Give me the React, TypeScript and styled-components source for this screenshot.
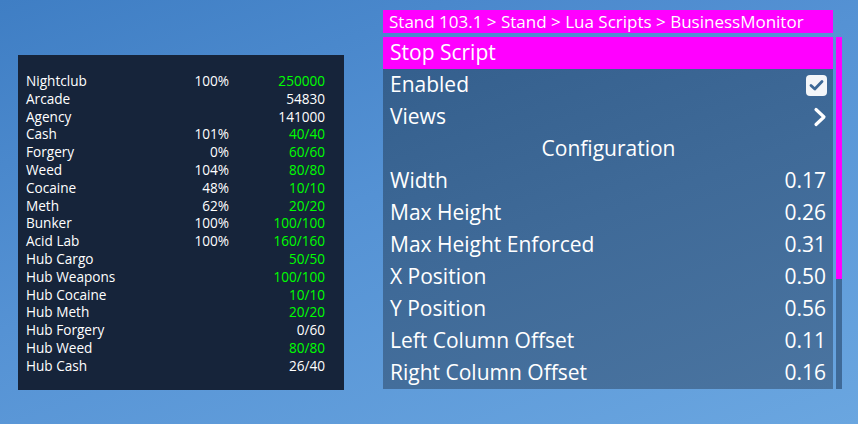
import React from "react";
import styled, { createGlobalStyle } from "styled-components";

const GlobalStyle = createGlobalStyle`
  html, body {
    margin: 0;
    padding: 0;
  }
  body {
    width: 858px;
    height: 424px;
    overflow: hidden;
    background: linear-gradient(160deg, #3f7ec4 0%, #5592d4 45%, #6aa6e0 100%);
    font-family: "Open Sans", "Noto Sans", sans-serif;
    color: #ffffff;
  }
`;

const Screen = styled.div`
  display: flex;
  align-items: flex-start;
  gap: 39px;
  padding-left: 18px;
  height: 424px;
  box-sizing: border-box;
`;

/* ---- business overlay ---- */

const Overlay = styled.div`
  margin-top: 55px;
  width: 326px;
  height: 335px;
  box-sizing: border-box;
  padding: 17px 19px 0 8px;
  background: #16243a;
`;

const StatRow = styled.div`
  display: grid;
  grid-template-columns: 1fr 60px 96px;
  height: 17.8px;
  line-height: 17.8px;
  font-size: 13.6px;
  white-space: nowrap;
`;

const Cell = styled.span<{ $right?: boolean; $full?: boolean }>`
  text-align: ${(p) => (p.$right ? "right" : "left")};
  color: ${(p) => (p.$full ? "#00ff00" : "#ffffff")};
`;

/* ---- stand menu ---- */

const Menu = styled.div`
  margin-top: 10px;
  display: flex;
  flex-direction: column;
  gap: 4px;
`;

const Breadcrumb = styled.div`
  width: 450px;
  height: 23px;
  box-sizing: border-box;
  padding-left: 6px;
  background: #ff00ff;
  font-size: 17px;
  line-height: 23px;
  white-space: nowrap;
`;

const ListWrap = styled.div`
  display: flex;
  gap: 3px;
`;

const List = styled.div`
  width: 450px;
  background: linear-gradient(160deg, #335e8c 0%, #3f6a98 50%, #4a74a0 100%);
`;

const Item = styled.div<{ $active?: boolean; $center?: boolean }>`
  height: 32px;
  box-sizing: border-box;
  padding: 0 6px 2px 7px;
  display: flex;
  align-items: center;
  justify-content: ${(p) => (p.$center ? "center" : "space-between")};
  background: ${(p) => (p.$active ? "#ff00ff" : "transparent")};
  font-size: 21px;
  white-space: nowrap;
`;

const Value = styled.span`
  margin-right: 1px;
`;

const Check = styled.span`
  width: 21px;
  height: 21px;
  margin-top: 2px;
  border-radius: 4px;
  background: #f4f6f9;
  display: flex;
  align-items: center;
  justify-content: center;
`;

const ChevronBox = styled.span`
  display: flex;
  margin-top: 2px;
`;

const Track = styled.div`
  width: 6px;
  background: #3f6a98;
  display: flex;
  flex-direction: column;
`;

const Thumb = styled.div`
  height: 242px;
  background: #ff00ff;
`;

type Stat = { name: string; pct?: string; value: string; full?: boolean };

const stats: Stat[] = [
  { name: "Nightclub", pct: "100%", value: "250000", full: true },
  { name: "Arcade", value: "54830" },
  { name: "Agency", value: "141000" },
  { name: "Cash", pct: "101%", value: "40/40", full: true },
  { name: "Forgery", pct: "0%", value: "60/60", full: true },
  { name: "Weed", pct: "104%", value: "80/80", full: true },
  { name: "Cocaine", pct: "48%", value: "10/10", full: true },
  { name: "Meth", pct: "62%", value: "20/20", full: true },
  { name: "Bunker", pct: "100%", value: "100/100", full: true },
  { name: "Acid Lab", pct: "100%", value: "160/160", full: true },
  { name: "Hub Cargo", value: "50/50", full: true },
  { name: "Hub Weapons", value: "100/100", full: true },
  { name: "Hub Cocaine", value: "10/10", full: true },
  { name: "Hub Meth", value: "20/20", full: true },
  { name: "Hub Forgery", value: "0/60" },
  { name: "Hub Weed", value: "80/80", full: true },
  { name: "Hub Cash", value: "26/40" },
];

const config: [string, string][] = [
  ["Width", "0.17"],
  ["Max Height", "0.26"],
  ["Max Height Enforced", "0.31"],
  ["X Position", "0.50"],
  ["Y Position", "0.56"],
  ["Left Column Offset", "0.11"],
  ["Right Column Offset", "0.16"],
];

const CheckIcon = () => (
  <svg width="15" height="12" viewBox="0 0 15 12">
    <path d="M2 6.5 L5.8 10 L13 2.5" fill="none" stroke="#3d6896" strokeWidth="2.8" strokeLinecap="round" strokeLinejoin="round" />
  </svg>
);

const Chevron = () => (
  <svg width="14" height="20" viewBox="0 0 14 20">
    <path d="M3 2.5 L11 10 L3 17.5" fill="none" stroke="#ffffff" strokeWidth="3.2" strokeLinecap="round" strokeLinejoin="round" />
  </svg>
);

export default function App() {
  return (
    <>
      <GlobalStyle />
      <Screen>
        <Overlay>
          {stats.map((s) => (
            <StatRow key={s.name}>
              <Cell>{s.name}</Cell>
              <Cell $right>{s.pct ?? ""}</Cell>
              <Cell $right $full={s.full}>{s.value}</Cell>
            </StatRow>
          ))}
        </Overlay>
        <Menu>
          <Breadcrumb>Stand 103.1 &gt; Stand &gt; Lua Scripts &gt; BusinessMonitor</Breadcrumb>
          <ListWrap>
            <List>
              <Item $active>Stop Script</Item>
              <Item>
                Enabled
                <Check><CheckIcon /></Check>
              </Item>
              <Item>
                Views
                <ChevronBox><Chevron /></ChevronBox>
              </Item>
              <Item $center>Configuration</Item>
              {config.map(([label, v]) => (
                <Item key={label}>
                  {label}
                  <Value>{v}</Value>
                </Item>
              ))}
            </List>
            <Track>
              <Thumb />
            </Track>
          </ListWrap>
        </Menu>
      </Screen>
    </>
  );
}
